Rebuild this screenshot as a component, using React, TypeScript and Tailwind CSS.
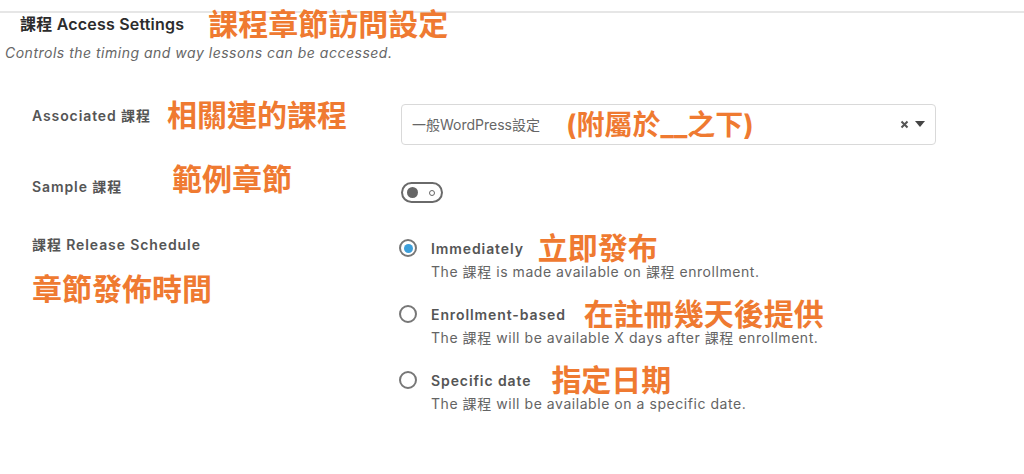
import React from "react";

const OR = "text-[#ef7a31] font-bold text-[30px] leading-none";

function Radio({ checked }: { checked?: boolean }) {
  return (
    <span className="w-[18px] h-[18px] rounded-full border-2 border-[#777] flex items-center justify-center shrink-0 bg-white">
      {checked && <span className="w-[9px] h-[9px] rounded-full bg-[#3d9fda]" />}
    </span>
  );
}

function Option({
  checked,
  label,
  note,
  desc,
  gap,
}: {
  checked?: boolean;
  label: string;
  note: string;
  desc: string;
  gap: string;
}) {
  return (
    <div className="flex flex-col">
      <div className="flex items-center h-[18px]">
        <Radio checked={checked} />
        <span className="ml-[14px] text-[14px] font-semibold text-[#555] tracking-[0.9px]">{label}</span>
        <span className={`${OR} ${gap}`}>{note}</span>
      </div>
      <div className="pl-[32px] mt-[6px] text-[14px] text-[#646464] tracking-[0.55px] leading-[18px]">{desc}</div>
    </div>
  );
}

export default function App() {
  return (
    <div
      className="w-[1024px] h-[474px] bg-white overflow-hidden"
      style={{ fontFamily: 'Inter, "Noto Sans CJK TC", sans-serif' }}
    >
      <div className="h-[11px]" />
      <div className="border-t-2 border-[#e6e6e6]">
        <div className="flex items-center h-[21px] pl-[20px]">
          <span className="text-[16px] font-semibold text-[#2c2c2c] tracking-[0.2px]">課程 Access Settings</span>
          <span className={`${OR} ml-[24px]`}>課程章節訪問設定</span>
        </div>
        <div className="pl-[5px] mt-[10px] text-[14px] italic text-[#666] tracking-[0.5px] leading-[18px]">
          Controls the timing and way lessons can be accessed.
        </div>

        {/* Associated row */}
        <div className="flex mt-[42px]">
          <div className="w-[401px] pl-[32px] flex items-center h-[22px]">
            <span className="text-[14px] font-semibold text-[#555] tracking-[0.9px]">Associated 課程</span>
            <span className={`${OR} ml-[16px]`}>相關連的課程</span>
          </div>
          <div className="w-[535px] h-[41px] border border-[#d9d9d9] rounded-[4px] flex items-center pl-[10px] pr-[10px]">
            <span className="text-[14px] text-[#666]">一般WordPress設定</span>
            <span className="text-[#ef7a31] font-bold text-[28px] leading-none ml-[26px]">(附屬於__之下)</span>
            <span className="ml-auto flex items-center gap-[6px]">
              <svg width="9" height="9" viewBox="0 0 9 9">
                <path d="M1.5 1.5 L7.5 7.5 M7.5 1.5 L1.5 7.5" stroke="#555" strokeWidth="2" />
              </svg>
              <svg width="10" height="7" viewBox="0 0 10 7">
                <path d="M0 0 H10 L5 6 Z" fill="#444" />
              </svg>
            </span>
          </div>
        </div>

        {/* Sample row */}
        <div className="flex items-start mt-[19px]">
          <div className="w-[401px] pl-[32px] flex items-start">
            <span className="mt-[14px] text-[14px] font-semibold text-[#555] tracking-[0.9px] leading-[18px]">Sample 課程</span>
            <span className={`${OR} ml-[50px]`}>範例章節</span>
          </div>
          <div className="mt-[18px] w-[42px] h-[21px] border-2 border-[#6a6a6a] rounded-full flex items-center justify-between pl-[4px] pr-[6px]">
            <span className="w-[11px] h-[11px] rounded-full bg-[#666]" />
            <span className="w-[6px] h-[6px] rounded-full border-[1.5px] border-[#666]" />
          </div>
        </div>

        {/* Release schedule */}
        <div className="flex items-start mt-[33px]">
          <div className="w-[399px] pl-[32px] flex flex-col">
            <span className="text-[14px] font-semibold text-[#555] tracking-[0.9px] leading-[18px]">課程 Release Schedule</span>
            <span className={`${OR} mt-[20px]`}>章節發佈時間</span>
          </div>
          <div className="flex flex-col gap-[24px] mt-[3px]">
            <Option
              checked
              label="Immediately"
              note="立即發布"
              gap="ml-[14px]"
              desc="The 課程 is made available on 課程 enrollment."
            />
            <Option
              label="Enrollment-based"
              note="在註冊幾天後提供"
              gap="ml-[18px]"
              desc="The 課程 will be available X days after 課程 enrollment."
            />
            <Option
              label="Specific date"
              note="指定日期"
              gap="ml-[20px]"
              desc="The 課程 will be available on a specific date."
            />
          </div>
        </div>
      </div>
    </div>
  );
}
